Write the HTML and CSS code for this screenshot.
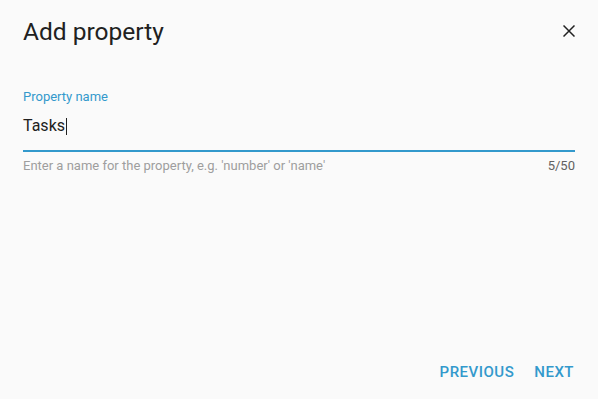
FILE: index.html
```html
<!DOCTYPE html>
<html>
<head>
<meta charset="utf-8">
<link rel="stylesheet" href="styles.css">
</head>
<body>
<div class="dialog">
  <div class="header">
    <h1 class="title">Add property</h1>
    <button class="close" aria-label="Close">
      <svg width="12" height="12" viewBox="0 0 12 12"><path d="M0.5 0.5 L11.5 11.5 M11.5 0.5 L0.5 11.5" stroke="#212121" stroke-width="1.5" fill="none"/></svg>
    </button>
  </div>
  <div class="field">
    <label class="label">Property name</label>
    <div class="input"><span class="value">Tasks</span><span class="caret"></span></div>
    <div class="underline"></div>
    <div class="hints">
      <span class="hint">Enter a name for the property, e.g. 'number' or 'name'</span>
      <span class="count">5/50</span>
    </div>
  </div>
  <div class="actions">
    <button class="btn">PREVIOUS</button>
    <button class="btn">NEXT</button>
  </div>
</div>
</body>
</html>
```
FILE: styles.css
```css
html, body {
  margin: 0;
  padding: 0;
  background: #fafafa;
  font-family: Roboto, "Liberation Sans", sans-serif;
}
.dialog {
  box-sizing: border-box;
  height: 399px;
  padding: 16px 23px 17px 23px;
  display: flex;
  flex-direction: column;
}
.header {
  display: flex;
  justify-content: space-between;
  align-items: flex-start;
}
.title {
  margin: 0;
  font-size: 24.5px;
  font-weight: 400;
  line-height: 32px;
  color: #212121;
}
.close {
  border: 0;
  background: none;
  padding: 0;
  margin-top: 9px;
  margin-right: 0;
  width: 12px;
  height: 12px;
  display: flex;
}
.field {
  margin-top: 41px;
  display: flex;
  flex-direction: column;
}
.label {
  font-size: 13px;
  line-height: 16px;
  color: #3399cc;
}
.input {
  margin-top: 9px;
  font-size: 16px;
  line-height: 24px;
  color: #212121;
  display: flex;
  align-items: center;
}
.caret {
  display: inline-block;
  width: 1px;
  height: 17px;
  background: #212121;
  margin-left: 1px;
}
.underline {
  margin-top: 12px;
  height: 2px;
  background: #3399cc;
}
.hints {
  display: flex;
  justify-content: space-between;
  margin-top: 6px;
  font-size: 13px;
  line-height: 16px;
}
.hint {
  color: #9e9e9e;
}
.count {
  color: #616161;
}
.actions {
  margin-top: auto;
  margin-right: 1px;
  display: flex;
  justify-content: flex-end;
  gap: 20px;
}
.btn {
  border: 0;
  background: none;
  padding: 0;
  font-family: Roboto, "Liberation Sans", sans-serif;
  font-size: 15px;
  font-weight: 500;
  letter-spacing: 0.5px;
  line-height: 20px;
  color: #3399cc;
}
```
